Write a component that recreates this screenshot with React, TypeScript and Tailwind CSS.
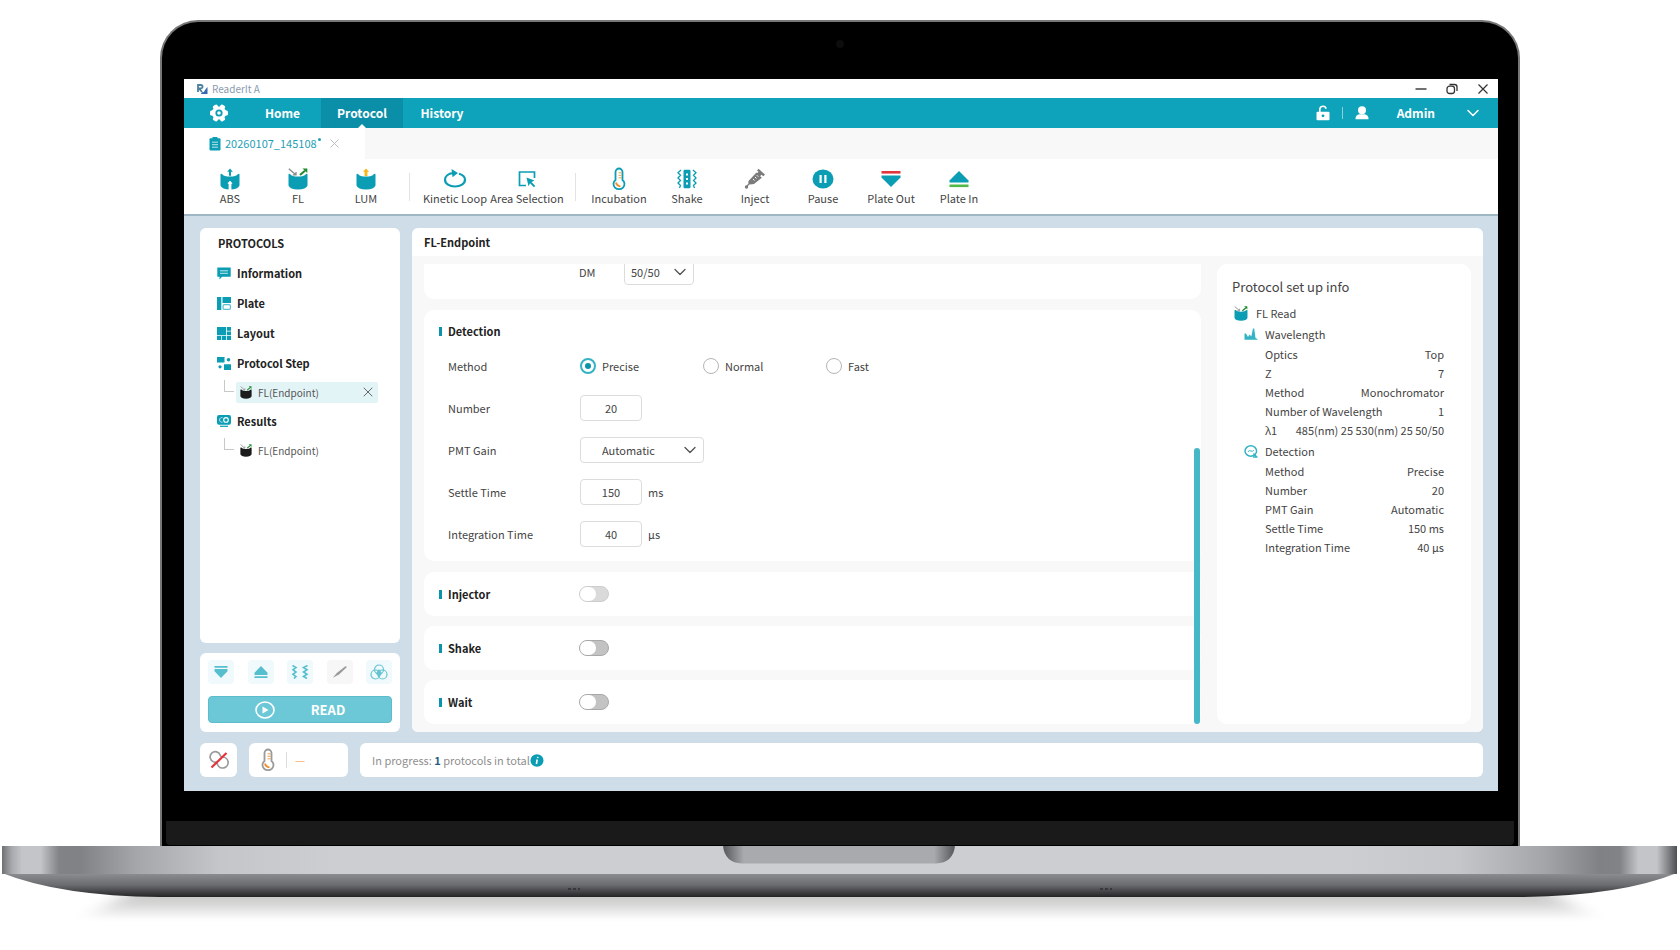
import type { ReactNode } from 'react';
import { ChevronDown, X } from 'lucide-react';

const TEAL = '#0b9db4';

/* ---------- icons ---------- */

function Cup({ kind, body = TEAL, className = 'w-5 h-[22px]' }: { kind: 'abs' | 'fl' | 'lum'; body?: string; className?: string }) {
  return (
    <svg viewBox="0 0 20 22" className={className} aria-hidden="true">
      <path d="M.5 6.2Q1 5.6 2 6Q4 8.6 10 8.6T18 6Q19 5.6 19.5 6.2V17.5Q18 21.5 10 21.6Q2 21.5 .5 17.5Z" fill={body} />
      {kind === 'abs' && (
        <>
          <path d="M10 .5l2.8 3.2h-1.8v4h-2v-4H7.2z" fill={body} />
          <path d="M10 13l2 2.4h-1v6.6H9v-6.6H8z" fill="#fff" stroke="#fff" strokeWidth=".8" />
        </>
      )}
      {kind === 'lum' && <path d="M10 .5l3 3.2h-1.6v4.3H8.6V3.7H7z" fill="#fbb615" />}
      {kind === 'fl' && (
        <>
          <path d="M.8 .8l6.700 5.800M8 4v2.900H4.800" stroke="#8a8a8a" strokeWidth="1.3" fill="none" />
          <path d="M12 7l5-4.200" stroke="#1d8a2c" strokeWidth="2" fill="none" />
          <path d="M14.500 .5H19.300V5z" fill="#1d8a2c" />
        </>
      )}
    </svg>
  );
}

function LoopIcon() {
  return (
    <svg viewBox="0 0 24 20" className="w-6 h-5" fill="none" aria-hidden="true">
      <path d="M16 4.8C19.5 5.8 22 8 22 10.8C22 14.6 17.5 17.5 12 17.5S2 14.6 2 10.8C2 7.2 5.500 4.6 10 4.2" stroke={TEAL} strokeWidth="2.2" />
      <path d="M8.5 0L15 4L9.5 8.2z" fill={TEAL} />
    </svg>
  );
}

function AreaIcon() {
  return (
    <svg viewBox="0 0 20 20" className="w-5 h-5" fill="none" aria-hidden="true">
      <path d="M9 16.5H2.5V3H17.5V9" stroke={TEAL} strokeWidth="1.7" />
      <path d="M9.5 8.5l8 3-3 1.5 3.8 4-1.4 1.3-3.9-4-1.5 3z" fill={TEAL} />
    </svg>
  );
}

function Thermometer({ color = TEAL }: { color?: string }) {
  return (
    <svg viewBox="0 0 16 24" className="w-4 h-6 shrink-0" fill="none" aria-hidden="true">
      <path d="M4.5 13V5a3.5 3.5 0 0 1 7 0v8a5.5 5.2 0 1 1-7 0z" stroke={color} strokeWidth="1.8" />
      <path d="M7.5 5.8h3M7.5 8.3h3M7.5 10.8h3" stroke="#f0a04a" strokeWidth="1" />
      <path d="M5 15.5q.5 3 4.5 4" stroke="#f0902c" strokeWidth="1.8" />
    </svg>
  );
}

function ShakeIcon() {
  return (
    <svg viewBox="0 0 22 20" className="w-[22px] h-5" fill="none" aria-hidden="true">
      <rect x="7.5" y=".8" width="7" height="18.4" rx="1.2" fill={TEAL} />
      <path d="M10 4.5h2v2h-2zM10 9h2v2h-2zM10 13.5h2v2h-2z" fill="#fff" />
      <path d="M5 1L2 3.8l2.5 2.5L2 9l2.5 2.5L2 14l2.5 2.5L3.5 19M17 1l3 2.8-2.5 2.5L20 9l-2.5 2.5L20 14l-2.5 2.5 1 2.5" stroke={TEAL} strokeWidth="1.3" />
    </svg>
  );
}

function InjectIcon() {
  return (
    <svg viewBox="0 0 22 22" className="w-[22px] h-[22px]" fill="#7b7b7b" aria-hidden="true">
      <path d="M4.500 13l8-8.500 5.300 5.200-7.800 6.300-4 .5-1.800-1.300z" />
      <path d="M13 2.500l1.600-1.700 6.400 5.800-1.600 1.700-2-1.500-1.800 2-3-3 2-2z" />
      <path d="M6.500 14.500l-3.500 3.500" stroke="#7b7b7b" strokeWidth="1.3" />
      <circle cx="2.5" cy="19" r="1.7" />
      <path d="M9 11l1.500 1.500M11 9l1.500 1.500M12.800 7.200l1.500 1.500" stroke="#fff" strokeWidth="1" />
    </svg>
  );
}

function PauseIcon() {
  return (
    <svg viewBox="0 0 22 20" className="w-[22px] h-5" aria-hidden="true">
      <ellipse cx="11" cy="10" rx="10.5" ry="9.5" fill={TEAL} />
      <path d="M7.5 6h2.2v8H7.5zM12.3 6h2.2v8h-2.2z" fill="#fff" />
    </svg>
  );
}

function PlateOutIcon() {
  return (
    <svg viewBox="0 0 20 20" className="w-5 h-5" aria-hidden="true">
      <path d="M.5 2h19v2.6H.5z" fill="#e0363c" />
      <path d="M.5 6.500h19v2L10 18 .5 8.500z" fill={TEAL} />
    </svg>
  );
}

function PlateInIcon() {
  return (
    <svg viewBox="0 0 20 20" className="w-5 h-5" aria-hidden="true">
      <path d="M10 2l9.5 9.5v2H.5v-2z" fill={TEAL} />
      <path d="M.5 15.500h19v2.600H.5z" fill="#52b848" />
    </svg>
  );
}

function GearIcon() {
  return (
    <svg viewBox="0 0 20 18" className="w-5 h-[18px]" aria-hidden="true">
      <g fill="#fff">
        <ellipse cx="10" cy="9" rx="7.5" ry="6.5" />
        <rect x="1" y="6.5" width="18" height="5" rx="1.5" />
        <rect x="1" y="6.5" width="18" height="5" rx="1.5" transform="rotate(60 10 9)" />
        <rect x="1" y="6.5" width="18" height="5" rx="1.5" transform="rotate(120 10 9)" />
      </g>
      <circle cx="10" cy="9" r="2.7" fill="none" stroke={TEAL} strokeWidth="1.8" />
    </svg>
  );
}

function LogoIcon() {
  return (
    <svg viewBox="0 0 12 12" className="w-3 h-3" fill="none" aria-hidden="true">
      <path d="M2 9V2h2.800a1.700 1.700 0 0 1 0 3.500H3L6 9" stroke="#4d7f9f" strokeWidth="1.8" />
      <path d="M6 9q1.500 1 2.500-1T11.500 4v7H5z" fill="#3568b5" />
    </svg>
  );
}

function LockIcon() {
  return (
    <svg viewBox="0 0 14 16" className="w-3.5 h-4" aria-hidden="true">
      <path d="M3.8 7V4.5a3.2 3.2 0 0 1 6.3-.8" stroke="#fff" strokeWidth="1.6" fill="none" />
      <rect x=".5" y="6.8" width="13" height="8.5" rx="1" fill="#fff" />
      <circle cx="7" cy="10.8" r="1.4" fill={TEAL} />
    </svg>
  );
}

function UserIcon() {
  return (
    <svg viewBox="0 0 14 14" className="w-3.5 h-3.5" fill="#fff" aria-hidden="true">
      <ellipse cx="7" cy="4.2" rx="4" ry="4" />
      <path d="M.5 12.5Q.5 9 4.5 8.3h5Q13.5 9 13.5 12.5v.8H.5z" />
    </svg>
  );
}

function ClipboardIcon() {
  return (
    <svg viewBox="0 0 12 14" className="w-3 h-3.5" aria-hidden="true">
      <rect x=".5" y="1.3" width="11" height="12.2" rx="1" fill={TEAL} />
      <rect x="3.5" y="0" width="5" height="2.5" rx=".5" fill={TEAL} />
      <path d="M3 5.2h6M3 7.7h6M3 10.2h6" stroke="#bfe6ec" strokeWidth="1" />
    </svg>
  );
}

function InfoBubble() {
  return (
    <svg viewBox="0 0 14 13" className="w-3.5 h-[13px]" aria-hidden="true">
      <path d="M.3.5h13.4v9.2H5L2.5 12.5V9.7H.3z" fill={TEAL} />
      <path d="M3 3.8h8M3 6.3h8" stroke="#bfe6ec" strokeWidth="1" />
    </svg>
  );
}

function PlateIcon() {
  return (
    <svg viewBox="0 0 14 13" className="w-3.5 h-[13px]" aria-hidden="true">
      <path d="M0 0h4.3v13H0zM5.5 0h8.5v6H5.5z" fill={TEAL} />
      <rect x="6.1" y="7.6" width="7.3" height="4.8" rx="1.2" fill="none" stroke="#5cbfcd" strokeWidth="1.2" />
    </svg>
  );
}

function LayoutIcon() {
  return (
    <svg viewBox="0 0 14 13" className="w-3.5 h-[13px]" fill={TEAL} aria-hidden="true">
      <path d="M0 0h9v8.300H0zM9.800 0H14v3.800H9.800zM9.800 4.500H14v3.800H9.800zM0 9h4.200v4H0zM4.900 9H9v4H4.900zM9.800 9H14v4H9.800z" />
    </svg>
  );
}

function StepIcon() {
  return (
    <svg viewBox="0 0 14 13" className="w-3.5 h-[13px]" fill={TEAL} aria-hidden="true">
      <path d="M0 0h7.500v5.500H0zM7 7.300h7V13H7z" />
      <circle cx="11.500" cy="2.800" r="1.800" />
      <circle cx="3" cy="9.800" r="1.600" />
    </svg>
  );
}

function ResultsIcon() {
  return (
    <svg viewBox="0 0 14 12" className="w-3.5 h-3" fill="none" aria-hidden="true">
      <rect x="0" y="0" width="14" height="9.8" rx="2" fill={TEAL} />
      <path d="M3 11.3h8" stroke={TEAL} strokeWidth="1.2" />
      <path d="M5.5 2.7a2.3 2.3 0 1 0 0 4.4" stroke="#bfe6ec" strokeWidth="1" />
      <circle cx="9" cy="4.9" r="2.3" stroke="#fff" strokeWidth="1.1" />
    </svg>
  );
}

function WaveIcon() {
  return (
    <svg viewBox="0 0 14 12" className="w-3.5 h-3" aria-hidden="true">
      <path d="M.5 11.500V5.500h1.500L4 9l1.500-2.500L7.300 8.500 9 .5h1.200l1.300 9.500 2 1v.8H.5z" fill="#35b3c5" />
    </svg>
  );
}

function DetectionIcon() {
  return (
    <svg viewBox="0 0 14 13" className="w-3.5 h-[13px]" fill="none" stroke="#35b3c5" aria-hidden="true">
      <ellipse cx="6.8" cy="6" rx="5.8" ry="5.2" strokeWidth="1.5" />
      <path d="M9.500 8.500l3.500 3.800M9 12h4.500" strokeWidth="1.5" />
      <path d="M4 6.600q1.500-1.500 3-.6t2.800-.8" strokeWidth="1" />
    </svg>
  );
}

/* ---------- data ---------- */

const readTools = [
  { label: 'ABS', icon: <Cup kind="abs" /> },
  { label: 'FL', icon: <Cup kind="fl" /> },
  { label: 'LUM', icon: <Cup kind="lum" /> },
];

const stepTools = [
  { label: 'Incubation', icon: <Thermometer /> },
  { label: 'Shake', icon: <ShakeIcon /> },
  { label: 'Inject', icon: <InjectIcon /> },
  { label: 'Pause', icon: <PauseIcon /> },
  { label: 'Plate Out', icon: <PlateOutIcon /> },
  { label: 'Plate In', icon: <PlateInIcon /> },
];

const wavelengthInfo = [
  ['Optics', 'Top'],
  ['Z', '7'],
  ['Method', 'Monochromator'],
  ['Number of Wavelength', '1'],
  ['λ1', '485(nm) 25 530(nm) 25 50/50'],
];

const detectionInfo = [
  ['Method', 'Precise'],
  ['Number', '20'],
  ['PMT Gain', 'Automatic'],
  ['Settle Time', '150 ms'],
  ['Integration Time', '40 µs'],
];

/* ---------- pieces ---------- */

function ToolButton({ label, icon, wide }: { label: string; icon: ReactNode; wide?: boolean }) {
  return (
    <button type="button" className={`flex flex-col items-center text-[11px] leading-4 text-[#444] whitespace-nowrap ${wide ? 'w-[72px]' : 'w-[68px]'}`}>
      <span className="flex h-[22px] items-center">{icon}</span>
      {label}
    </button>
  );
}

function Separator() {
  return <div className="h-7 w-px bg-[#e3e3e3]" />;
}

function TreeItem({ icon, label }: { icon: ReactNode; label: string }) {
  return (
    <a href="#" className="flex h-[30px] items-center gap-1.5 pl-[17px] text-[11px] font-bold text-[#222]">
      {icon}
      {label}
    </a>
  );
}

function TreeChild({ active }: { active?: boolean }) {
  return (
    <div className="flex h-7 items-center pl-6 pr-[22px]">
      <span className="mb-3 h-3 w-2.5 border-b border-l border-[#c8c8c8]" />
      <div className={`ml-0.5 flex h-[21px] flex-1 items-center justify-between rounded-xs pr-0.5 pl-1 ${active ? 'bg-[#e3f4f7]' : ''}`}>
        <a href="#" className="flex items-center gap-1.5 text-[10px] text-[#555]">
          <Cup kind="fl" body="#1c1c1c" className="w-3 h-[13px]" />
          FL(Endpoint)
        </a>
        {active && (
          <button type="button" aria-label="Remove step" className="text-[#666]">
            <X size={16} strokeWidth={1.5} />
          </button>
        )}
      </div>
    </div>
  );
}

function CardTitle({ children }: { children: ReactNode }) {
  return (
    <h3 className="flex w-[140px] items-center gap-1.5 text-[11px] font-bold text-[#222]">
      <span className="h-[9px] w-[3px] bg-[#0b93ab]" />
      {children}
    </h3>
  );
}

function FormRow({ label, htmlFor, children }: { label: string; htmlFor?: string; children: ReactNode }) {
  return (
    <div className="flex h-[26px] items-center">
      <label htmlFor={htmlFor} className="w-[132px]">{label}</label>
      {children}
    </div>
  );
}

function NumberBox({ id, value, unit }: { id: string; value: string; unit?: string }) {
  return (
    <>
      <input id={id} type="text" defaultValue={value} className="h-[26px] w-[62px] rounded-sm border border-[#dcdcdc] bg-white text-center" />
      {unit && <span className="ml-1.5">{unit}</span>}
    </>
  );
}

function SelectBox({ id, value, className }: { id: string; value: string; className: string }) {
  return (
    <div className="relative">
      <select id={id} defaultValue={value} className={`h-[26px] appearance-none rounded-sm border border-[#dcdcdc] bg-white ${className}`}>
        <option>{value}</option>
      </select>
      <ChevronDown size={20} strokeWidth={1.6} className="pointer-events-none absolute top-[3px] right-1 text-[#555]" />
    </div>
  );
}

function ToggleCard({ label, disabled }: { label: string; disabled?: boolean }) {
  return (
    <label className="flex h-11 items-center rounded-[10px] bg-white pl-[15px]">
      <CardTitle>{label}</CardTitle>
      <input
        type="checkbox"
        role="switch"
        disabled={disabled}
        className={`h-4 w-[30px] appearance-none rounded-full border before:block before:h-3.5 before:w-4 before:rounded-full before:bg-white ${
          disabled ? 'border-[#cdcdcd] bg-[#dadada]' : 'border-[#a8a8a8] bg-[#c3c3c3]'
        }`}
      />
    </label>
  );
}

function InfoRows({ rows }: { rows: string[][] }) {
  return (
    <dl className="pl-[33px]">
      {rows.map(([name, value]) => (
        <div key={name} className="flex h-[19px] items-center justify-between whitespace-nowrap">
          <dt>{name}</dt>
          <dd>{value}</dd>
        </div>
      ))}
    </dl>
  );
}

/* ---------- application ---------- */

function TitleBar() {
  return (
    <div className="flex h-[19px] items-center justify-between bg-white pl-3 pr-[9px]">
      <div className="flex items-center gap-1 text-[10px] text-[#8b9bb0]">
        <LogoIcon />
        ReaderIt A
      </div>
      <div className="flex items-center gap-[19px] text-[#333]">
        <button type="button" aria-label="Minimize">
          <svg viewBox="0 0 12 12" className="size-3"><path d="M.5 6h11" stroke="currentColor" strokeWidth="1.4" /></svg>
        </button>
        <button type="button" aria-label="Restore">
          <svg viewBox="0 0 12 12" className="size-3" fill="none" stroke="currentColor" strokeWidth="1.3">
            <rect x="1" y="3.2" width="7.5" height="7.3" rx="2.500" />
            <path d="M3.5 1.5H8.500a2.500 2.500 0 0 1 2.500 2.500v4" />
          </svg>
        </button>
        <button type="button" aria-label="Close">
          <svg viewBox="0 0 12 12" className="size-3"><path d="M1.5 1.5l9 9M10.5 1.5l-9 9" stroke="currentColor" strokeWidth="1.2" /></svg>
        </button>
      </div>
    </div>
  );
}

function NavBar() {
  return (
    <header className="flex h-[30px] items-stretch justify-between bg-[#0ea3ba] text-xs font-bold text-white">
      <nav className="flex items-stretch">
        <button type="button" aria-label="Settings" className="w-[60px] pl-[25px]"><GearIcon /></button>
        <a href="#" className="flex w-[77px] items-center justify-center">Home</a>
        <a href="#" className="relative flex w-[82px] items-center justify-center bg-[#0b8ea8]">
          Protocol
          <svg viewBox="0 0 8 4" className="absolute bottom-0 left-1/2 h-1 w-2 -translate-x-1/2"><path d="M4 0l4 4H0z" fill="#fff" /></svg>
        </a>
        <a href="#" className="flex w-[78px] items-center justify-center">History</a>
      </nav>
      <div className="flex items-center pr-[15px]">
        <LockIcon />
        <span className="ml-3 h-3 w-px bg-white/50" />
        <span className="ml-3"><UserIcon /></span>
        <button type="button" className="ml-7 flex items-center gap-7">
          Admin
          <ChevronDown size={20} strokeWidth={1.8} />
        </button>
      </div>
    </header>
  );
}

function Sidebar() {
  return (
    <aside className="flex w-[200px] shrink-0 flex-col gap-[10px]">
      <section className="flex-1 rounded-md bg-white">
        <h2 className="flex h-[30px] items-center pl-[18px] text-[11px] font-bold text-[#222]">PROTOCOLS</h2>
        <TreeItem icon={<InfoBubble />} label="Information" />
        <TreeItem icon={<PlateIcon />} label="Plate" />
        <TreeItem icon={<LayoutIcon />} label="Layout" />
        <TreeItem icon={<StepIcon />} label="Protocol Step" />
        <TreeChild active />
        <TreeItem icon={<ResultsIcon />} label="Results" />
        <TreeChild />
      </section>

      <section className="rounded-md bg-white px-2 pt-[7px] pb-[9px]">
        <div className="flex justify-between">
          <button type="button" aria-label="Plate out" className="flex h-6 w-[26px] items-center justify-center rounded-sm bg-[#f0f9fb]">
            <svg viewBox="0 0 14 14" className="size-3.5" fill="#55bfce"><path d="M.5 1h13v1.8H.5zM.5 4h13v2.2L7 13 .5 6.2z" /></svg>
          </button>
          <button type="button" aria-label="Plate in" className="flex h-6 w-[26px] items-center justify-center rounded-sm bg-[#f0f9fb]">
            <svg viewBox="0 0 14 14" className="size-3.5" fill="#55bfce"><path d="M7 1l6.5 6.8v2.2H.5V7.8zM.5 11.2h13V13H.5z" /></svg>
          </button>
          <button type="button" aria-label="Shake plate" className="flex h-6 w-[26px] items-center justify-center rounded-sm bg-[#f0f9fb]">
            <svg viewBox="0 0 18 14" className="h-3.5 w-[18px]" fill="none" stroke="#55bfce" strokeWidth="1.6">
              <path d="M1.5 .5l3.5 2-3 2.2 3 2.3-3 2.3 3 2.2-2 2M16.5 .5l-4 2 3.5 2.2-3.5 2.3 3.5 2.3-3.5 2.2 3.5 2" />
            </svg>
          </button>
          <button type="button" aria-label="Inject" className="flex h-6 w-[26px] items-center justify-center rounded-sm bg-[#f7f7f7]">
            <svg viewBox="0 0 16 14" className="h-3.5 w-4"><path d="M.8 12.8l4-4.8L13 1.5q2-.8 1.5 1L7 9.5z" fill="#9b9b9b" /></svg>
          </button>
          <button type="button" aria-label="Filters" className="flex h-6 w-[26px] items-center justify-center rounded-sm bg-[#f0f9fb]">
            <svg viewBox="0 0 18 16" className="h-4 w-[18px]" fill="none" stroke="#66c4d2" strokeWidth="1.2">
              <circle cx="9" cy="5.5" r="4.5" />
              <circle cx="5.5" cy="10.5" r="4.5" />
              <circle cx="12.5" cy="10.5" r="4.5" />
              <path d="M9 6l2.5 3.5L9 12 6.5 9.5z" fill="#66c4d2" />
            </svg>
          </button>
        </div>
        <button type="button" className="mt-3 flex h-[27px] w-full items-center justify-center gap-9 rounded-sm border border-[#5bbccb] bg-[#6cc8d6] text-[13px] font-bold text-white">
          <svg viewBox="0 0 20 18" className="h-[18px] w-5" fill="none">
            <ellipse cx="10" cy="9" rx="9" ry="8" stroke="#fff" strokeWidth="1.6" />
            <path d="M7.5 5.5l6 3.5-6 3.5z" fill="#fff" />
          </svg>
          READ
        </button>
      </section>
    </aside>
  );
}

function EndpointPanel() {
  return (
    <section className="flex min-w-0 flex-1 flex-col rounded-md bg-white">
      <h2 className="flex h-7 items-center pl-3 text-[11px] font-bold text-[#222]">FL-Endpoint</h2>
      <div className="flex flex-1 gap-4 rounded-b-md bg-[#f8f8f8] pt-2 pr-3 pb-2 pl-3 text-[11px] text-[#444]">
        <div className="relative flex min-w-0 flex-1 flex-col gap-[11px]">
          <div className="flex h-[35px] items-end overflow-hidden rounded-b-[10px] bg-white pb-[14px] pl-[155px]">
            <div className="flex shrink-0 items-center">
              <label htmlFor="dm" className="w-[45px]">DM</label>
              <SelectBox id="dm" value="50/50" className="w-[70px] pl-1.5" />
            </div>
          </div>

          <div className="rounded-[10px] bg-white pr-4 pb-[14px] pl-[15px]">
            <div className="flex h-[43px] items-center"><CardTitle>Detection</CardTitle></div>
            <div className="flex flex-col gap-4 pl-[9px]">
              <div role="radiogroup" aria-label="Method" className="flex h-[26px] items-center">
                <span className="w-[132px]">Method</span>
                {['Precise', 'Normal', 'Fast'].map((m) => (
                  <label key={m} className="flex w-[123px] items-center gap-1.5">
                    <input
                      type="radio"
                      name="method"
                      defaultChecked={m === 'Precise'}
                      className="size-4 appearance-none rounded-full border border-[#b5b5b5] bg-white p-[3px] checked:border-2 checked:border-[#35b3c5] before:block before:size-full before:rounded-full checked:before:bg-[#0b93ab]"
                    />
                    {m}
                  </label>
                ))}
              </div>
              <FormRow label="Number" htmlFor="number"><NumberBox id="number" value="20" /></FormRow>
              <FormRow label="PMT Gain" htmlFor="gain"><SelectBox id="gain" value="Automatic" className="w-[124px] pl-[21px]" /></FormRow>
              <FormRow label="Settle Time" htmlFor="settle"><NumberBox id="settle" value="150" unit="ms" /></FormRow>
              <FormRow label="Integration Time" htmlFor="integration"><NumberBox id="integration" value="40" unit="µs" /></FormRow>
            </div>
          </div>

          <div className="flex flex-col gap-[10px]">
            <ToggleCard label="Injector" disabled />
            <ToggleCard label="Shake" />
            <ToggleCard label="Wait" />
          </div>

          {/* Scroll thumb */}
          <div className="absolute right-px bottom-0 h-[60%] w-1.5 rounded-full bg-[#45b8c8]" />
        </div>

        <aside className="w-[254px] shrink-0 rounded-[10px] bg-white pr-[27px] pl-[15px]">
          <h3 className="mt-[11px] flex h-6 items-center text-[13px]">Protocol set up info</h3>
          <div className="mt-1 flex h-5 items-center gap-2 pl-0.5">
            <Cup kind="fl" className="w-3.5 h-[15px]" />
            FL Read
          </div>
          <div className="flex h-[22px] items-center gap-[7px] pl-3"><WaveIcon />Wavelength</div>
          <InfoRows rows={wavelengthInfo} />
          <div className="flex h-[22px] items-center gap-[7px] pl-3"><DetectionIcon />Detection</div>
          <InfoRows rows={detectionInfo} />
        </aside>
      </div>
    </section>
  );
}

function StatusBar() {
  return (
    <footer className="flex h-[34px] gap-3">
      <div className="flex w-[37px] items-center justify-center rounded-md bg-white">
        <svg viewBox="0 0 22 20" className="h-5 w-[22px]" fill="none" aria-hidden="true">
          <path d="M5.500 11.800A5.200 5.200 0 1 1 12.300 5.500Q12.800 7 14.500 7A5.500 5.500 0 1 1 9.500 14.500Q9 12 5.500 11.800" stroke="#9a9a9a" strokeWidth="1.7" />
          <path d="M3.500 17.500L18.500 3" stroke="#e3343c" strokeWidth="2.200" />
        </svg>
      </div>
      <div className="flex w-[99px] items-center rounded-md bg-white pl-[11px]">
        <Thermometer color="#9a9a9a" />
        <span className="ml-2.5 h-4 w-px bg-[#ddd]" />
        <span className="ml-2 text-[11px] font-bold text-[#f7bd8c]">—</span>
      </div>
      <div className="flex flex-1 items-center rounded-md bg-white pl-3 text-[11px] text-[#8f8f8f]">
        <p>In progress: <b className="text-[#1f5f86]">1</b> protocols in total</p>
        <svg viewBox="0 0 14 13" className="h-[13px] w-3.5" aria-hidden="true">
          <ellipse cx="7" cy="6.5" rx="6.5" ry="6.2" fill={TEAL} />
          <path d="M7.8 2.8l-.2 1.2M7.2 5.5l-.8 4.5" stroke="#fff" strokeWidth="1.6" />
        </svg>
      </div>
    </footer>
  );
}

function LaptopBase() {
  return (
    <svg viewBox="0 0 1680 84" preserveAspectRatio="none" className="block h-[84px] w-full" aria-hidden="true">
      <defs>
        <linearGradient id="edge" x1="0" x2="1">
          <stop offset="0" stopColor="#6f7074" />
          <stop offset=".006" stopColor="#a9aaae" />
          <stop offset=".012" stopColor="#c4c5c9" />
          <stop offset=".023" stopColor="#c4c5c9" />
          <stop offset=".034" stopColor="#828387" />
          <stop offset=".046" stopColor="#808185" />
          <stop offset=".08" stopColor="#a5a6aa" />
          <stop offset=".13" stopColor="#c5c6ca" />
          <stop offset=".2" stopColor="#cdced2" />
          <stop offset=".8" stopColor="#cdced2" />
          <stop offset=".87" stopColor="#c5c6ca" />
          <stop offset=".92" stopColor="#a5a6aa" />
          <stop offset=".954" stopColor="#808185" />
          <stop offset=".966" stopColor="#828387" />
          <stop offset=".977" stopColor="#c4c5c9" />
          <stop offset=".988" stopColor="#c4c5c9" />
          <stop offset="1" stopColor="#4f5054" />
        </linearGradient>
        <linearGradient id="under" x1="0" x2="0" y1="0" y2="1">
          <stop offset="0" stopColor="#8e8f93" />
          <stop offset=".5" stopColor="#6b6c70" />
          <stop offset="1" stopColor="#242427" />
        </linearGradient>
        <linearGradient id="notch" x1="0" x2="1">
          <stop offset="0" stopColor="#55565a" />
          <stop offset=".09" stopColor="#a9aaad" />
          <stop offset=".91" stopColor="#a9aaad" />
          <stop offset="1" stopColor="#55565a" />
        </linearGradient>
        <linearGradient id="shade" x1="0" x2="0" y1="0" y2="1">
          <stop offset="0" stopColor="#c6c6c5" />
          <stop offset=".4" stopColor="#d4d4d4" />
          <stop offset="1" stopColor="#fff" />
        </linearGradient>
        <filter id="soft" x="-5%" y="-30%" width="110%" height="160%"><feGaussianBlur stdDeviation="12 2" /></filter>
      </defs>
      <path d="M130 46H1550L1595 74H85z" fill="url(#shade)" filter="url(#soft)" />
      <path d="M2 27Q60 50 160 51H1520Q1620 50 1677 27z" fill="url(#under)" />
      <path d="M2 0H1677V28H2z" fill="url(#edge)" />
      <path d="M723 0H955Q953 17 936 17.500H742Q725 17 723 0z" fill="url(#notch)" />
      <path d="M568 43h12M1100 43h12" stroke="#38383b" strokeWidth="2" strokeDasharray="3 2" />
    </svg>
  );
}

export default function App() {
  return (
    <div className="min-h-screen bg-white pt-5 font-['Noto_Sans_CJK_SC','Noto_Sans',sans-serif]">
      <div className="px-[160px]">
        <div className="flex flex-col rounded-t-[38px] border-x-2 border-t-2 border-[#777] bg-black pt-[18px]">
          <div className="mx-auto size-2 rounded-full bg-[#0d0d0d]" />
          <div className="mt-[31px] mr-5 ml-[22px] bg-[#cfdde8]">
            <TitleBar />
            <NavBar />
            <div className="flex h-[31px] items-center bg-[#f8f8f8]">
              <div className="flex h-full w-[181px] items-center bg-white pl-[25px]">
                <ClipboardIcon />
                <a href="#" className="ml-1 text-[11px] text-[#1f9fb5]">20260107_145108</a>
                <span className="mb-2 ml-px size-[3px] rounded-full bg-[#1f9fb5]" />
                <button type="button" aria-label="Close tab" className="ml-1.5 text-[#bbb]"><X size={15} strokeWidth={1.5} /></button>
              </div>
            </div>
            <div className="flex h-[57px] items-center border-b-2 border-[#9fb6c4] bg-white pl-3">
              {readTools.map((t) => <ToolButton key={t.label} {...t} />)}
              <div className="mx-[9px]"><Separator /></div>
              <ToolButton label="Kinetic Loop" icon={<LoopIcon />} wide />
              <ToolButton label="Area Selection" icon={<AreaIcon />} wide />
              <div className="mr-[9px] ml-3"><Separator /></div>
              {stepTools.map((t) => <ToolButton key={t.label} {...t} />)}
            </div>
            <main className="flex flex-col gap-[11px] pt-3 pr-[15px] pb-[14px] pl-4">
              <div className="flex gap-3">
                <Sidebar />
                <EndpointPanel />
              </div>
              <StatusBar />
            </main>
          </div>
          <div className="mx-1 mt-[30px] mb-px h-6 rounded-b-sm bg-[#1a1a1a]" />
        </div>
      </div>
      <LaptopBase />
    </div>
  );
}
